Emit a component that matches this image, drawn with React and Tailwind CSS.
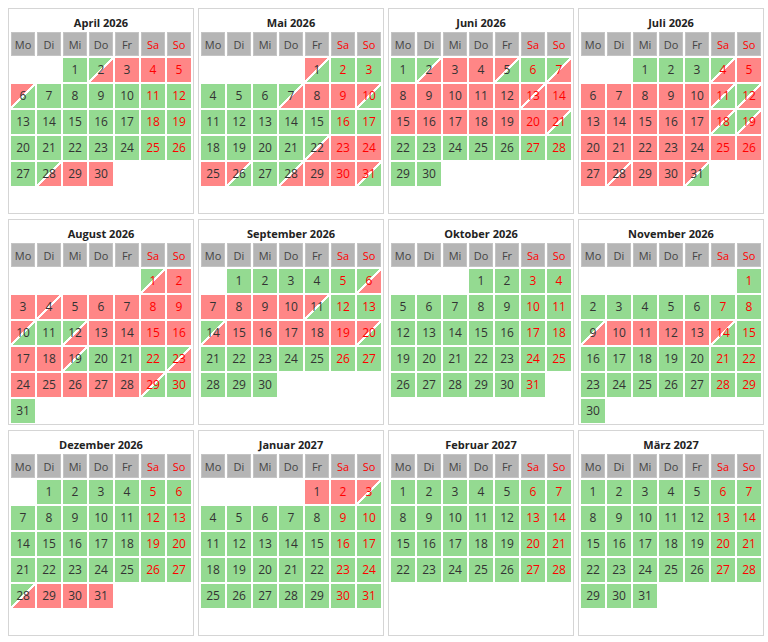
import React from "react";

const G = "g", R = "r";

function build(len, overrides) {
  const arr = Array(len).fill(G);
  for (const [k, v] of Object.entries(overrides)) {
    const parts = String(k).split("-");
    const a = parseInt(parts[0], 10);
    const b = parts[1] ? parseInt(parts[1], 10) : a;
    for (let i = a; i <= b; i++) arr[i - 1] = v;
  }
  return arr;
}

const months = [
  { name: "April 2026", y: 2026, m: 3, days: build(30, { 2: "gr", "3-5": R, 6: "rg", 28: "gr", "29-30": R }) },
  { name: "Mai 2026", y: 2026, m: 4, days: build(31, { 1: "rg", 7: "gr", "8-9": R, 10: "rg", 22: "gr", "23-25": R, 26: "rg", 28: "gr", "29-30": R, 31: "rg" }) },
  { name: "Juni 2026", y: 2026, m: 5, days: build(30, { 2: "gr", "3-4": R, 5: "rg", 7: "gr", "8-12": R, 13: "rr", "14-20": R, 21: "rg" }) },
  { name: "Juli 2026", y: 2026, m: 6, days: build(31, { 4: "gr", "5-10": R, 11: "rg", 12: "gr", "13-17": R, 18: "rg", 19: "gr", "20-27": R, 28: "rr", "29-30": R, 31: "rg" }) },
  { name: "August 2026", y: 2026, m: 7, days: build(31, { 1: "gr", "2-3": R, 4: "rr", "5-9": R, 10: "rg", 12: "gr", "13-18": R, 19: "rg", 23: "gr", "24-28": R, 29: "rg" }) },
  { name: "September 2026", y: 2026, m: 8, days: build(30, { 6: "gr", "7-10": R, 11: "rg", 14: "gr", "15-19": R, 20: "rg" }) },
  { name: "Oktober 2026", y: 2026, m: 9, days: build(31, {}) },
  { name: "November 2026", y: 2026, m: 10, days: build(30, { 9: "gr", "10-13": R, 14: "rg" }) },
  { name: "Dezember 2026", y: 2026, m: 11, days: build(31, { 28: "gr", "29-31": R }) },
  { name: "Januar 2027", y: 2027, m: 0, days: build(31, { "1-2": R, 3: "rg" }) },
  { name: "Februar 2027", y: 2027, m: 1, days: build(28, {}) },
  { name: "März 2027", y: 2027, m: 2, days: build(31, {}) },
];

const bgClass = {
  g: "bg-[#94da91]",
  r: "bg-[#ff8686]",
  gr: "bg-[linear-gradient(to_bottom_right,#94da91_0%,#94da91_46%,#ffffff_46%,#ffffff_54%,#ff8686_54%,#ff8686_100%)]",
  rg: "bg-[linear-gradient(to_bottom_right,#ff8686_0%,#ff8686_46%,#ffffff_46%,#ffffff_54%,#94da91_54%,#94da91_100%)]",
  rr: "bg-[linear-gradient(to_bottom_right,#ff8686_0%,#ff8686_46%,#ffffff_46%,#ffffff_54%,#ff8686_54%,#ff8686_100%)]",
};

const heads = ["Mo", "Di", "Mi", "Do", "Fr", "Sa", "So"];

function Month({ month }) {
  const first = new Date(month.y, month.m, 1).getDay();
  const offset = (first + 6) % 7;
  const cells = [];
  for (let i = 0; i < offset; i++) cells.push(<div key={"e" + i} className="h-[24px]" />);
  month.days.forEach((s, i) => {
    const col = (offset + i) % 7;
    const weekend = col >= 5;
    cells.push(
      <div
        key={i}
        className={`h-[24px] flex items-center justify-center text-[12px] leading-none ${bgClass[s]} ${weekend ? "text-[#ff0000]" : "text-[#333333]"}`}
      >
        {i + 1}
      </div>
    );
  });
  return (
    <div className="h-[206px] border border-[#d5d5d5] px-[2px] bg-white">
      <div className="h-[21px] flex items-end justify-center pb-[2px] text-[11px] font-bold leading-none text-[#222222]">
        {month.name}
      </div>
      <div className="grid grid-cols-[repeat(7,24px)] gap-[2px] pt-[2px]">
        {heads.map((h, i) => (
          <div
            key={h}
            className={`h-[24px] flex items-center justify-center text-[11px] leading-none bg-[#b5b5b5] border border-[#c4c4c4] ${i >= 5 ? "text-[#ff0000]" : "text-[#444444]"}`}
          >
            {h}
          </div>
        ))}
        {cells}
      </div>
    </div>
  );
}

export default function App() {
  return (
    <div className="w-[768px] h-[642px] bg-white pl-[8px] pt-[8px] font-['Open_Sans',sans-serif]">
      <div className="grid grid-cols-[repeat(4,186px)] gap-x-[4px] gap-y-[5px]">
        {months.map((m) => (
          <Month key={m.name} month={m} />
        ))}
      </div>
    </div>
  );
}
